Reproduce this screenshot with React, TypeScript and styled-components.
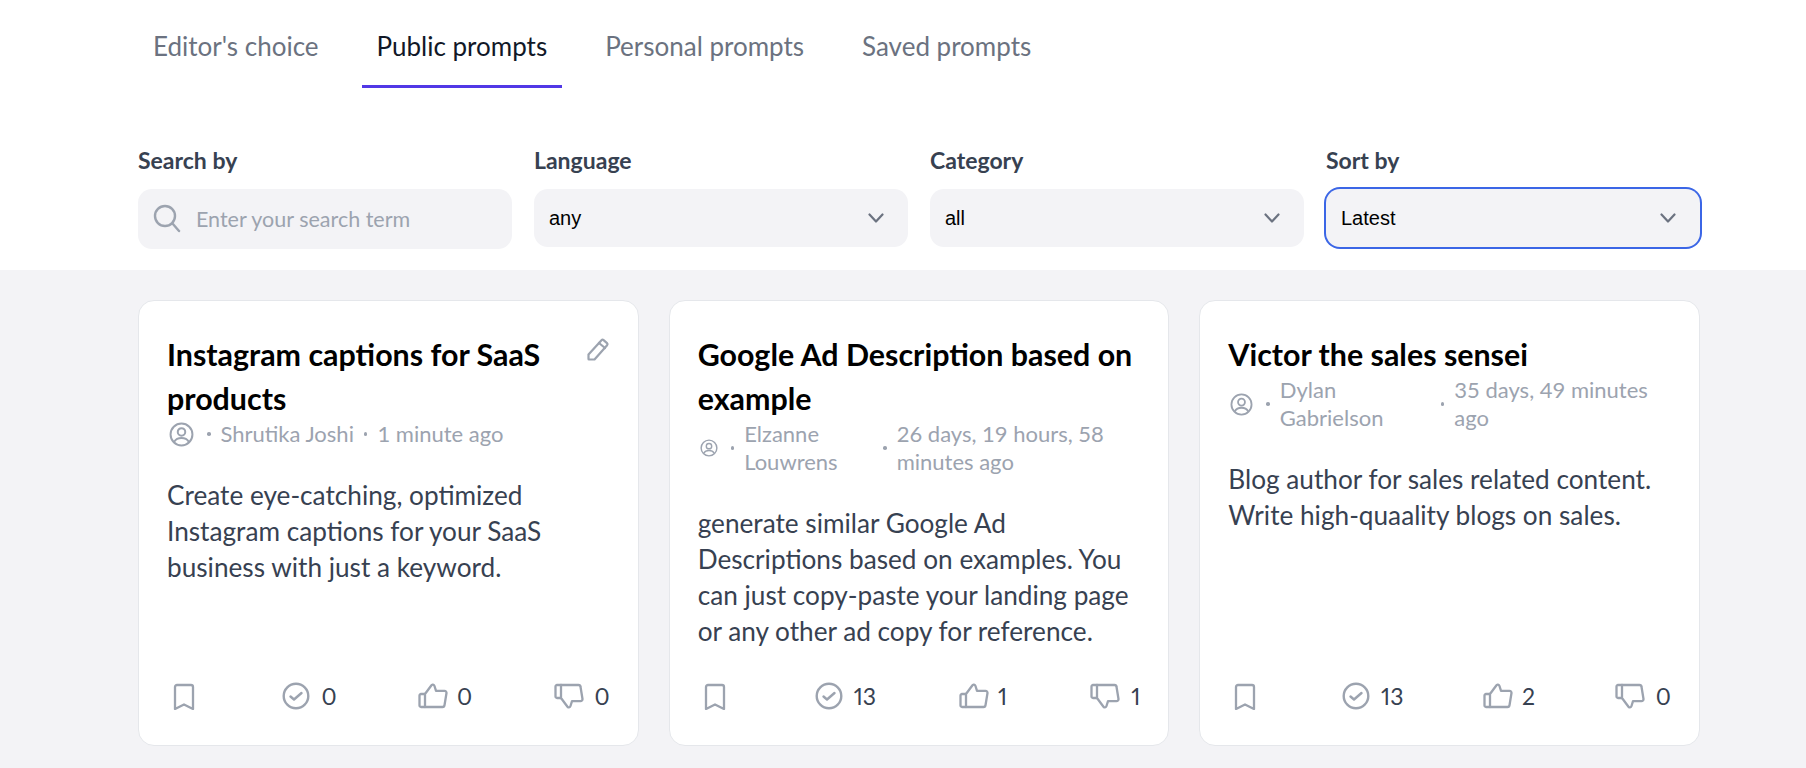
import React from 'react'
import styled, { createGlobalStyle } from 'styled-components'

const FONT = `Lato, 'Noto Sans', sans-serif`

const GlobalStyle = createGlobalStyle`
  * { box-sizing: border-box; }
  html, body { margin: 0; padding: 0; background: #f3f3f6; }
  body { font-family: ${FONT}; }
`

const Page = styled.div`
  width: 1806px;
`
const TopSection = styled.header`
  background: #fff;
  padding: 0 105px 21px 138px;
`
const Tabs = styled.nav`
  display: flex;
  gap: 28px;
`
const Tab = styled.div<{ $active?: boolean }>`
  height: 88px;
  padding: 29px 15px 0;
  font-size: 26px;
  line-height: 34px;
  white-space: nowrap;
  color: ${({ $active }) => ($active ? '#111827' : '#6b7280')};
  border-bottom: 3px solid ${({ $active }) => ($active ? '#5138e6' : 'transparent')};
`
const Filters = styled.div`
  display: grid;
  grid-template-columns: repeat(4, 374px);
  gap: 22px;
  padding-top: 58px;
`
const Filter = styled.div`
  display: flex;
  flex-direction: column;
  gap: 15px;
`
const Label = styled.label`
  font-size: 23px;
  line-height: 28px;
  font-weight: 700;
  color: #374151;
`
const SearchBox = styled.div`
  display: flex;
  align-items: center;
  gap: 15px;
  height: 60px;
  padding-left: 15px;
  background: #f3f3f6;
  border-radius: 14px;
`
const SearchInput = styled.input`
  flex: 1;
  min-width: 0;
  border: 0;
  outline: 0;
  padding: 0 0 1px;
  background: transparent;
  font-family: ${FONT};
  font-size: 21.5px;
  color: #111827;
  &::placeholder { color: #9ca3af; opacity: 1; }
`
const Select = styled.div<{ $focused?: boolean }>`
  display: flex;
  align-items: center;
  justify-content: space-between;
  height: 58px;
  padding: 0 24px 0 15px;
  background: #f3f3f6;
  border-radius: 14px;
  font-family: 'Liberation Sans', Arial, sans-serif;
  font-size: 20px;
  color: #000;
  box-shadow: ${({ $focused }) => ($focused ? '0 0 0 2px #3b66e6' : 'none')};
`
const Board = styled.main`
  display: grid;
  grid-template-columns: repeat(3, 1fr);
  gap: 30px;
  padding: 30px 106px 24px 138px;
`
const Card = styled.article`
  display: flex;
  flex-direction: column;
  padding: 31px 28px 35px;
  background: #fff;
  border: 1px solid #e5e7eb;
  border-radius: 16px;
`
const TitleRow = styled.div`
  display: flex;
  justify-content: space-between;
  align-items: flex-start;
  gap: 20px;
`
const Title = styled.h2`
  margin: 0;
  font-size: 30.4px;
  line-height: 44px;
  font-weight: 700;
  color: #000;
`
const Meta = styled.div`
  display: flex;
  align-items: center;
  gap: 10px;
  font-size: 22px;
  line-height: 28px;
  color: #9ca3af;
`
const Dot = styled.span`
  flex: none;
  width: 3.5px;
  height: 3.5px;
  border-radius: 50%;
  background: #9ca3af;
`
const Author = styled.span<{ $width?: number }>`
  flex: ${({ $width }) => ($width ? `0 0 ${$width}px` : 'none')};
`
const Time = styled.span`
  flex: 1;
  min-width: 0;
`
const Description = styled.p`
  margin: 29px 0 0;
  font-size: 26.2px;
  line-height: 36px;
  color: #374151;
`
const Footer = styled.footer`
  display: flex;
  align-items: center;
  justify-content: space-between;
  margin-top: auto;
  padding-top: 33px;
`
const Stat = styled.div<{ $gap: number }>`
  display: flex;
  align-items: center;
  gap: ${({ $gap }) => $gap}px;
  height: 28px;
  font-size: 23px;
  font-variant-numeric: proportional-nums;
  color: #374151;
`
const IconSvg = styled.svg<{ $flip?: boolean; $inset?: number; $gapAfter?: number; $drop?: number }>`
  display: block;
  flex: none;
  fill: none;
  stroke: currentColor;
  stroke-linecap: round;
  stroke-linejoin: round;
  color: #9ca3af;
  margin-left: ${({ $inset }) => $inset ?? 0}px;
  margin-right: ${({ $gapAfter }) => $gapAfter ?? 0}px;
  margin-top: ${({ $drop }) => $drop ?? 0}px;
  transform: ${({ $flip }) => ($flip ? 'scaleY(-1)' : 'none')};
`
const ChevronSvg = styled(IconSvg)`
  color: #6b7280;
`

const SearchIcon = () => (
  <IconSvg width="28" height="32" viewBox="0 0 28 32" strokeWidth="2.4">
    <circle cx="12" cy="13" r="10" />
    <path d="M19.5 20.5 26 28" />
  </IconSvg>
)
const ChevronIcon = () => (
  <ChevronSvg width="16" height="10" viewBox="0 0 16 10" strokeWidth="2.2">
    <path d="M1.5 1.5 8 8.5l6.5-7" />
  </ChevronSvg>
)
const PencilIcon = () => (
  <IconSvg width="24" height="24" viewBox="0 0 24 24" strokeWidth="2.2" $drop={5}>
    <path d="M2.5 17.5 15.5 3.2a1.5 1.5 0 0 1 2.1-.1l3.4 3a1.5 1.5 0 0 1 .1 2.1L8.5 22.5H3a.5.5 0 0 1-.5-.5z" />
    <path d="m13 6 6 5" />
  </IconSvg>
)
const UserIcon = ({ size }: { size: number }) => (
  <IconSvg width={size} height={size} viewBox="0 0 24 24" strokeWidth="1.9" $inset={2} $gapAfter={3}>
    <circle cx="12" cy="12" r="10.5" />
    <circle cx="12" cy="9.5" r="3.6" />
    <path d="M5 19c1.5-2.6 4-3.6 7-3.6s5.500 1 7 3.600" />
  </IconSvg>
)
const BookmarkIcon = () => (
  <IconSvg width="34" height="28" viewBox="0 0 34 28" strokeWidth="2.3">
    <path d="M8 5a2 2 0 0 1 2-2h14a2 2 0 0 1 2 2V27l-9-4.500L8 27z" />
  </IconSvg>
)
const CheckIcon = () => (
  <IconSvg width="28" height="28" viewBox="0 0 28 28" strokeWidth="2.4">
    <circle cx="14" cy="14" r="12.300" />
    <path d="m8.500 14.500 3.500 3 7.500-6.500" />
  </IconSvg>
)
const ThumbIcon = ({ flip }: { flip?: boolean }) => (
  <IconSvg width="30" height="28" viewBox="0 0 30 28" strokeWidth="2.300" $flip={flip}>
    <path d="M7 12H3a1.500 1.500 0 0 0-1.500 1.500v10A1.500 1.500 0 0 0 3 25h4" />
    <path d="M7 25h17.500a2 2 0 0 0 2-1.800L28.500 11a2 2 0 0 0-2-2.200H18L16.500 4c-.5-1.500-2.500-2-3.200-.5L7 12z" />
  </IconSvg>
)

type Prompt = {
  title: string
  author: string
  time: string
  description: string
  used: number
  up: number
  down: number
  editable?: boolean
  iconSize: number
  authorWidth?: number
}

const prompts: Prompt[] = [
  {
    title: 'Instagram captions for SaaS products',
    author: 'Shrutika Joshi',
    time: '1 minute ago',
    description: 'Create eye-catching, optimized Instagram captions for your SaaS business with just a keyword.',
    used: 0,
    up: 0,
    down: 0,
    editable: true,
    iconSize: 25,
  },
  {
    title: 'Google Ad Description based on example',
    author: 'Elzanne Louwrens',
    time: '26 days, 19 hours, 58 minutes ago',
    description:
      'generate similar Google Ad Descriptions based on examples. You can just copy-paste your landing page or any other ad copy for reference.',
    used: 13,
    up: 1,
    down: 1,
    iconSize: 18,
    authorWidth: 129,
  },
  {
    title: 'Victor the sales sensei',
    author: 'Dylan Gabrielson',
    time: '35 days, 49 minutes ago',
    description: 'Blog author for sales related content. Write high-quaality blogs on sales.',
    used: 13,
    up: 2,
    down: 0,
    iconSize: 23,
    authorWidth: 151,
  },
]

const PromptCard = ({ prompt }: { prompt: Prompt }) => (
  <Card>
    <TitleRow>
      <Title>{prompt.title}</Title>
      {prompt.editable && <PencilIcon />}
    </TitleRow>
    <Meta>
      <UserIcon size={prompt.iconSize} />
      <Dot />
      <Author $width={prompt.authorWidth}>{prompt.author}</Author>
      <Dot />
      <Time>{prompt.time}</Time>
    </Meta>
    <Description>{prompt.description}</Description>
    <Footer>
      <BookmarkIcon />
      <Stat $gap={11}>
        <CheckIcon />
        {prompt.used}
      </Stat>
      <Stat $gap={9}>
        <ThumbIcon />
        {prompt.up}
      </Stat>
      <Stat $gap={11}>
        <ThumbIcon flip />
        {prompt.down}
      </Stat>
    </Footer>
  </Card>
)

export default function App() {
  return (
    <Page>
      <GlobalStyle />
      <TopSection>
        <Tabs>
          <Tab>Editor's choice</Tab>
          <Tab $active>Public prompts</Tab>
          <Tab>Personal prompts</Tab>
          <Tab>Saved prompts</Tab>
        </Tabs>
        <Filters>
          <Filter>
            <Label>Search by</Label>
            <SearchBox>
              <SearchIcon />
              <SearchInput placeholder="Enter your search term" />
            </SearchBox>
          </Filter>
          <Filter>
            <Label>Language</Label>
            <Select>
              any
              <ChevronIcon />
            </Select>
          </Filter>
          <Filter>
            <Label>Category</Label>
            <Select>
              all
              <ChevronIcon />
            </Select>
          </Filter>
          <Filter>
            <Label>Sort by</Label>
            <Select $focused>
              Latest
              <ChevronIcon />
            </Select>
          </Filter>
        </Filters>
      </TopSection>
      <Board>
        {prompts.map((prompt) => (
          <PromptCard key={prompt.title} prompt={prompt} />
        ))}
      </Board>
    </Page>
  )
}
